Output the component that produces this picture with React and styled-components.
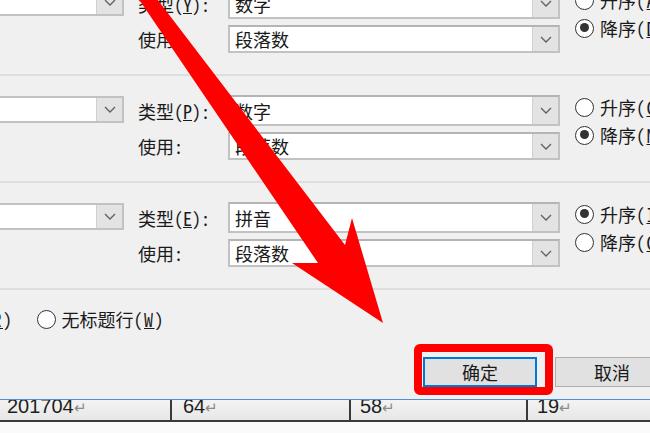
import React from "react";
import styled, { createGlobalStyle } from "styled-components";

const GlobalStyle = createGlobalStyle`
  html, body {
    margin: 0;
    padding: 0;
    background: #fafafa;
  }
`;

const cjk = `"Noto Sans Mono CJK SC", "Noto Sans CJK SC", sans-serif`;

const Screen = styled.div`
  position: relative;
  width: 650px;
  height: 433px;
  overflow: hidden;
  background: #fafafa;
  font-family: ${cjk};
  font-size: 18px;
  color: #1a1a1a;
`;

const Dialog = styled.div`
  margin-top: -31px;
  margin-left: -100px;
  width: 800px;
  background: #f0f0f0;
  padding-bottom: 12px;
  border-bottom: 1px solid #4a90d6;
`;

const Section = styled.div`
  display: flex;
  align-items: flex-start;
  padding: 19px 0 21px;
  border-bottom: 2px solid #dedede;
`;

const LeftSelect = styled.div`
  display: flex;
  width: 224px;
  height: 27px;
  margin-top: 1px;
  margin-right: 14px;
  box-sizing: border-box;
  background: #fff;
  border: 2px solid #c2c2c2;
`;

const SelectBody = styled.div`
  flex: 1;
  display: flex;
  align-items: center;
  padding-left: 5px;
  white-space: nowrap;
  overflow: hidden;
`;

const DropButton = styled.div`
  width: 25px;
  display: flex;
  align-items: center;
  justify-content: center;
  background: #e3e3e3;
  border-left: 1px solid #d0d0d0;
`;

const LabelCol = styled.div`
  width: 90px;
  display: flex;
  flex-direction: column;
  gap: 6px;
`;

const Label = styled.div`
  height: ${(p) => p.h}px;
  display: flex;
  align-items: center;
  line-height: 20px;
  white-space: nowrap;
`;

const ComboCol = styled.div`
  width: 332px;
  display: flex;
  flex-direction: column;
  gap: 6px;
`;

const Combo = styled.div`
  display: flex;
  height: ${(p) => p.h}px;
  box-sizing: border-box;
  background: #fff;
  border: 2px solid #c2c2c2;
  border-top-color: #b4b4b4;
`;

const RadioCol = styled.div`
  margin-left: 15px;
  padding-top: 2px;
  display: flex;
  flex-direction: column;
  gap: 8px;
`;

const RadioRow = styled.label`
  display: flex;
  align-items: center;
  gap: 6px;
  height: 20px;
  line-height: 20px;
  white-space: nowrap;
`;

const Key = styled.span`
  letter-spacing: 1.5px;
`;

const Circle = styled.span`
  position: relative;
  width: 19px;
  height: 19px;
  box-sizing: border-box;
  border: 1.5px solid #333;
  border-radius: 50%;
  background: #fff;
  flex: none;
  &::after {
    content: "";
    display: ${(p) => (p.checked ? "block" : "none")};
    position: absolute;
    left: 3.5px;
    top: 3.5px;
    width: 9px;
    height: 9px;
    border-radius: 50%;
    background: #333;
  }
`;

const HeaderRow = styled.div`
  display: flex;
  align-items: center;
  gap: 23px;
  padding-top: 19px;
  margin-left: -15px;
`;

const ButtonRow = styled.div`
  display: flex;
  justify-content: flex-end;
  gap: 18px;
  margin-top: 28px;
  padding-right: 31px;
`;

const Button = styled.div`
  position: relative;
  width: 114px;
  height: 30px;
  box-sizing: border-box;
  display: flex;
  align-items: center;
  justify-content: center;
  background: #e1e1e1;
  border: ${(p) => (p.focused ? "2px solid #0078d7" : "1px solid #adadad")};
  line-height: 20px;
`;

const Highlight = styled.span`
  position: absolute;
  top: -15px;
  left: -11px;
  right: -18px;
  bottom: -10px;
  border: 8px solid #ff0000;
  border-radius: 6px;
  pointer-events: none;
`;

const TableRow = styled.div`
  display: flex;
  height: 20px;
  background: linear-gradient(#f3f3f3, #e7e7e7);
  border-bottom: 2px solid #3a3a3a;
  font-family: "Liberation Sans", Arial, sans-serif;
  font-size: 20px;
  color: #1e1e1e;
`;

const Cell = styled.div`
  width: ${(p) => p.w}px;
  flex: ${(p) => (p.w ? "none" : "1")};
  padding-left: ${(p) => p.pad}px;
  box-sizing: border-box;
  border-right: ${(p) => (p.w ? "2px solid #3a3a3a" : "none")};
  overflow: hidden;
  line-height: 12px;
  white-space: nowrap;
`;

const Mark = styled.span`
  color: #8a8a8a;
  font-size: 15px;
`;

const Arrow = styled.svg`
  position: absolute;
  left: 0;
  top: 0;
  width: 650px;
  height: 433px;
  overflow: visible;
  pointer-events: none;
`;

const Chevron = () => (
  <svg width="12" height="7" viewBox="0 0 12 7">
    <polyline points="1,1 6,6 11,1" fill="none" stroke="#5f5f5f" strokeWidth="1.3" />
  </svg>
);

const Select = ({ h, text }) => (
  <Combo h={h}>
    <SelectBody>{text}</SelectBody>
    <DropButton>
      <Chevron />
    </DropButton>
  </Combo>
);

const Radio = ({ checked, children }) => (
  <RadioRow>
    <Circle checked={checked} />
    <span>{children}</span>
  </RadioRow>
);

const keys = [
  { key: "Y", type: "数字", asc: false, a: "A", d: "D" },
  { key: "P", type: "数字", asc: false, a: "C", d: "N" },
  { key: "E", type: "拼音", asc: true, a: "I", d: "G" },
];

export default function App() {
  return (
    <Screen>
      <GlobalStyle />
      <Dialog>
        {keys.map((k) => (
          <Section key={k.key}>
            <LeftSelect>
              <SelectBody />
              <DropButton>
                <Chevron />
              </DropButton>
            </LeftSelect>
            <LabelCol>
              <Label h={31}>
                类型(<u>{k.key}</u>):
              </Label>
              <Label h={28}>使用:</Label>
            </LabelCol>
            <ComboCol>
              <Select h={31} text={k.type} />
              <Select h={28} text="段落数" />
            </ComboCol>
            <RadioCol>
              <Radio checked={k.asc}>
                升序<Key>(<u>{k.a}</u>)</Key>
              </Radio>
              <Radio checked={!k.asc}>
                降序<Key>(<u>{k.d}</u>)</Key>
              </Radio>
            </RadioCol>
          </Section>
        ))}
        <HeaderRow>
          <Radio checked>
            有标题行<Key>(<u>R</u>)</Key>
          </Radio>
          <Radio>
            无标题行<Key>(<u>W</u>)</Key>
          </Radio>
        </HeaderRow>
        <ButtonRow>
          <Button focused>
            确定
            <Highlight />
          </Button>
          <Button>取消</Button>
        </ButtonRow>
      </Dialog>
      <TableRow>
        <Cell w={172} pad={7}>
          201704<Mark>↵</Mark>
        </Cell>
        <Cell w={179} pad={11}>
          64<Mark>↵</Mark>
        </Cell>
        <Cell w={177} pad={9}>
          58<Mark>↵</Mark>
        </Cell>
        <Cell pad={9}>
          19<Mark>↵</Mark>
        </Cell>
      </TableRow>
      <Arrow viewBox="0 0 650 433">
        <polygon
          points="136,-5 154,-5 345,245 352,218 383,323 292,263 318,263"
          fill="#ff0000"
        />
      </Arrow>
    </Screen>
  );
}
